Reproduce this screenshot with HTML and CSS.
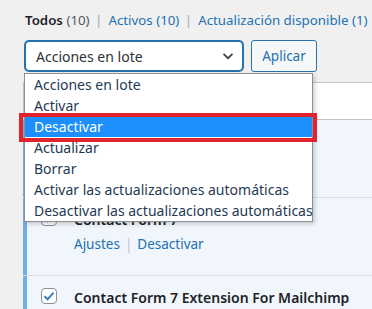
FILE: index.html
```html
<!DOCTYPE html>
<html lang="es">
<head>
    <meta charset="UTF-8">
    <title>Plugins</title>
    <link rel="stylesheet" href="styles.css">
</head>
<body>
    <div class="page">
        <ul class="views">
            <li><b>Todos</b> <span class="count">(10)</span> <span class="sep">|</span></li>
            <li><a href="#">Activos (10)</a> <span class="sep">|</span></li>
            <li><a href="#">Actualización disponible (1)</a></li>
        </ul>

        <div class="tablenav">
            <div class="select">
                <span>Acciones en lote</span>
                <svg class="chevron" width="12" height="8" viewBox="0 0 12 8"><path d="M1.5 1.8 6 6.2l4.5-4.4" fill="none" stroke="#3c434a" stroke-width="1.8"/></svg>
            </div>
            <button class="apply">Aplicar</button>

            <!-- lista abierta del select -->
            <ul class="menu">
                <li>Acciones en lote</li>
                <li>Activar</li>
                <li class="on">Desactivar</li>
                <li>Actualizar</li>
                <li>Borrar</li>
                <li>Activar las actualizaciones automáticas</li>
                <li>Desactivar las actualizaciones automáticas</li>
            </ul>
        </div>

        <div class="table">
            <div class="thead">
                <span class="check"></span>
            </div>
            <div class="row active">
                <span class="check on"><svg width="12" height="10" viewBox="0 0 12 10"><path d="M1.5 5.2 4.6 8.2 10.6 1.6" fill="none" stroke="#3582c4" stroke-width="2"/></svg></span>
            </div>
            <div class="row active">
                <span class="check on"><svg width="12" height="10" viewBox="0 0 12 10"><path d="M1.5 5.2 4.6 8.2 10.6 1.6" fill="none" stroke="#3582c4" stroke-width="2"/></svg></span>
                <div class="plugin">
                    <div class="title">Contact Form 7</div>
                    <div class="actions"><a href="#">Ajustes</a><span class="bar">|</span><a href="#">Desactivar</a></div>
                </div>
            </div>
            <div class="row active">
                <span class="check on"><svg width="12" height="10" viewBox="0 0 12 10"><path d="M1.5 5.2 4.6 8.2 10.6 1.6" fill="none" stroke="#3582c4" stroke-width="2"/></svg></span>
                <div class="plugin">
                    <div class="title">Contact Form 7 Extension For Mailchimp</div>
                </div>
            </div>
        </div>

        <div class="mark"></div>
    </div>
</body>
</html>
```

FILE: styles.css
```css
body{
    margin: 0;
    background: #f0f0f1;
    font-family: "Noto Sans", "Open Sans", sans-serif;
    font-size: 13.5px;
    color: #2c3338;
    overflow: hidden;
}
.page{
    position: relative;
    padding-left: 24px;
}
a{
    color: #2271b1;
    text-decoration: none;
}

/* filtros */
.views{
    list-style: none;
    margin: 0;
    padding: 10px 0 0 1px;
    display: flex;
    white-space: nowrap;
    line-height: 20px;
    font-size: 13.3px;
    gap: 4px;
}
.views b{
    color: #1d2327;
    font-weight: 600;
}
.views .count{
    color: #50575e;
}
.views .sep{
    color: #a7aaad;
    margin: 0 2px;
}

/* acciones en lote */
.tablenav{
    margin-top: 10px;
    display: flex;
    gap: 8px;
    height: 32px;
}
.select{
    width: 218px;
    height: 30px;
    border: 1px solid #2271b1;
    box-shadow: 0 0 0 1px #2271b1;
    margin: 1px 0 0 1px;
    border-radius: 4px;
    background: #fff;
    display: flex;
    align-items: center;
    justify-content: space-between;
    padding: 0 8px 0 10px;
    box-sizing: border-box;
    font-size: 14px;
    color: #2c3338;
}
.apply{
    width: 66px;
    height: 32px;
    border: 1px solid #2271b1;
    border-radius: 3px;
    background: #f6f7f7;
    color: #2271b1;
    font-family: inherit;
    font-size: 13.5px;
    padding: 0;
}
.menu{
    position: absolute;
    left: 24px;
    top: 73px;
    z-index: 2;
    width: 289px;
    box-sizing: border-box;
    margin: 0;
    padding: 0;
    list-style: none;
    background: #fff;
    border: 1px solid #8c8f94;
    box-shadow: 2px 2px 4px rgba(0,0,0,.18);
    font-size: 14px;
    color: #1f3a52;
    white-space: nowrap;
}
.menu li{
    height: 21px;
    line-height: 21px;
    padding-left: 9px;
}
.menu .on{
    background: #1e8ffe;
    color: #fff;
}
.mark{
    position: absolute;
    z-index: 3;
    left: 19px;
    top: 113px;
    width: 298px;
    height: 29px;
    box-sizing: border-box;
    border: 4px solid #e2232c;
}

/* tabla */
.table{
    margin: 10px 0 0 -1px;
    border-top: 1px solid #c3c4c7;
    border-left: 1px solid #c3c4c7;
    background: #fff;
}
.thead{
    height: 36px;
    border-bottom: 1px solid #c3c4c7;
    display: flex;
    align-items: center;
    padding-left: 17px;
}
.row{
    border-bottom: 1px solid #dcdcde;
    display: flex;
    align-items: flex-start;
    padding: 12px 0 0 17px;
    height: 65px;
    gap: 17px;
}
.active{
    background: #f0f6fc;
    box-shadow: inset 4px 0 0 #72aee6;
    margin-left: -1px;
    padding-left: 18px;
}
.check{
    width: 16px;
    height: 16px;
    box-sizing: border-box;
    border: 1px solid #8c8f94;
    border-radius: 4px;
    background: #fff;
    display: flex;
    align-items: center;
    justify-content: center;
    flex: none;
}
.title{
    line-height: 20px;
    font-weight: 600;
    font-size: 14px;
    color: #1d2327;
    white-space: nowrap;
}
.actions{
    margin-top: 4px;
    line-height: 20px;
    font-size: 13.5px;
}
.actions .bar{
    color: #c3c4c7;
    margin: 0 5px;
}
```
